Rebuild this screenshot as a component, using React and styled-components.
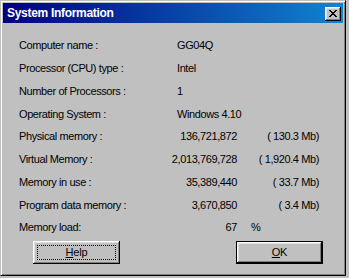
import React from "react";
import styled, { createGlobalStyle } from "styled-components";

const GlobalStyle = createGlobalStyle`
  html, body {
    margin: 0;
    padding: 0;
    background: #c0c0c0;
  }
  body {
    font-family: "Liberation Sans", Arial, sans-serif;
  }
`;

const Window = styled.div`
  box-sizing: border-box;
  width: 346px;
  height: 276px;
  padding: 2px;
  background: #c0c0c0;
  border-top: 1px solid #c0c0c0;
  border-left: 1px solid #c0c0c0;
  border-right: 1px solid #000;
  border-bottom: 1px solid #000;
  box-shadow: inset 1px 1px #fff, inset -1px -1px #808080;
  display: flex;
  flex-direction: column;
`;

const TitleBar = styled.div`
  height: 20px;
  flex: none;
  display: flex;
  align-items: center;
  justify-content: space-between;
  padding: 0 2px 0 4px;
  background: linear-gradient(to right, #000080, #1084d0);
`;

const Title = styled.span`
  color: #fff;
  font-weight: bold;
  font-size: 12px;
  letter-spacing: -0.3px;
`;

const CloseButton = styled.button`
  box-sizing: border-box;
  width: 16px;
  height: 14px;
  padding: 0;
  margin-top: 1px;
  background: #c0c0c0;
  border: none;
  box-shadow: inset -1px -1px #000, inset 1px 1px #fff, inset -2px -2px #808080, inset 2px 2px #dfdfdf;
  display: flex;
  align-items: center;
  justify-content: center;
`;

const Body = styled.div`
  padding: 11px 20px 0 16px;
  font-size: 11px;
  letter-spacing: -0.4px;
  color: #000;
`;

const InfoGrid = styled.div`
  display: grid;
  grid-template-columns: 149px 69px 82px;
  grid-auto-rows: 22.75px;
  align-items: center;
  white-space: nowrap;
`;

const Label = styled.span`
  grid-column: 1;
`;

const TextValue = styled.span`
  grid-column: 2 / span 2;
  padding-left: 9px;
`;

const Number = styled.span`
  grid-column: 2;
  text-align: right;
`;

const Unit = styled.span`
  grid-column: 3;
  text-align: ${(p) => (p.$left ? "left" : "right")};
  padding-left: ${(p) => (p.$left ? "14px" : "0")};
`;

const ButtonRow = styled.div`
  display: flex;
  justify-content: space-between;
  padding-left: 14px;
  margin-top: 2px;
`;

const Button = styled.button`
  box-sizing: border-box;
  width: 87px;
  height: 23px;
  padding: 0;
  background: #c0c0c0;
  font-family: "Liberation Sans", Arial, sans-serif;
  font-size: 11px;
  letter-spacing: -0.2px;
  color: #000;
  position: relative;
  border: ${(p) => (p.$default ? "1px solid #000" : "none")};
  box-shadow: inset -1px -1px #000, inset 1px 1px #fff, inset -2px -2px #808080, inset 2px 2px #dfdfdf;
  display: flex;
  align-items: center;
  justify-content: center;
`;

const FocusRing = styled.span`
  position: absolute;
  inset: 4px;
  border: 1px dotted #000;
  pointer-events: none;
`;

const Mnemonic = styled.span`
  text-decoration: underline;
  text-underline-offset: 1px;
`;

const rows = [
  { label: "Computer name :", text: "GG04Q" },
  { label: "Processor (CPU) type :", text: "Intel" },
  { label: "Number of Processors :", text: "1" },
  { label: "Operating System :", text: "Windows 4.10" },
  { label: "Physical memory :", num: "136,721,872", unit: "( 130.3 Mb)" },
  { label: "Virtual Memory :", num: "2,013,769,728", unit: "( 1,920.4 Mb)" },
  { label: "Memory in use :", num: "35,389,440", unit: "( 33.7 Mb)" },
  { label: "Program data memory :", num: "3,670,850", unit: "( 3.4 Mb)" },
  { label: "Memory load:", num: "67", pct: "%" },
];

function CloseIcon() {
  return (
    <svg width="8" height="7" viewBox="0 0 8 7" shapeRendering="crispEdges">
      <path
        fill="#000"
        d="M0 0h2v1h1v1h2v-1h1v-1h2v1h-1v1h-1v1h-1v1h1v1h1v1h1v1h-2v-1h-1v-1h-2v1h-1v1h-2v-1h1v-1h1v-1h1v-1h-1v-1h-1v-1h-1z"
      />
    </svg>
  );
}

export default function App() {
  return (
    <>
      <GlobalStyle />
      <Window>
        <TitleBar>
          <Title>System Information</Title>
          <CloseButton aria-label="Close">
            <CloseIcon />
          </CloseButton>
        </TitleBar>
        <Body>
          <InfoGrid>
            {rows.map((r) => (
              <React.Fragment key={r.label}>
                <Label>{r.label}</Label>
                {r.text && <TextValue>{r.text}</TextValue>}
                {r.num && <Number>{r.num}</Number>}
                {r.unit && <Unit>{r.unit}</Unit>}
                {r.pct && <Unit $left>{r.pct}</Unit>}
              </React.Fragment>
            ))}
          </InfoGrid>
          <ButtonRow>
            <Button>
              <FocusRing />
              <span>
                <Mnemonic>H</Mnemonic>elp
              </span>
            </Button>
            <Button $default>
              <span>
                <Mnemonic>O</Mnemonic>K
              </span>
            </Button>
          </ButtonRow>
        </Body>
      </Window>
    </>
  );
}
